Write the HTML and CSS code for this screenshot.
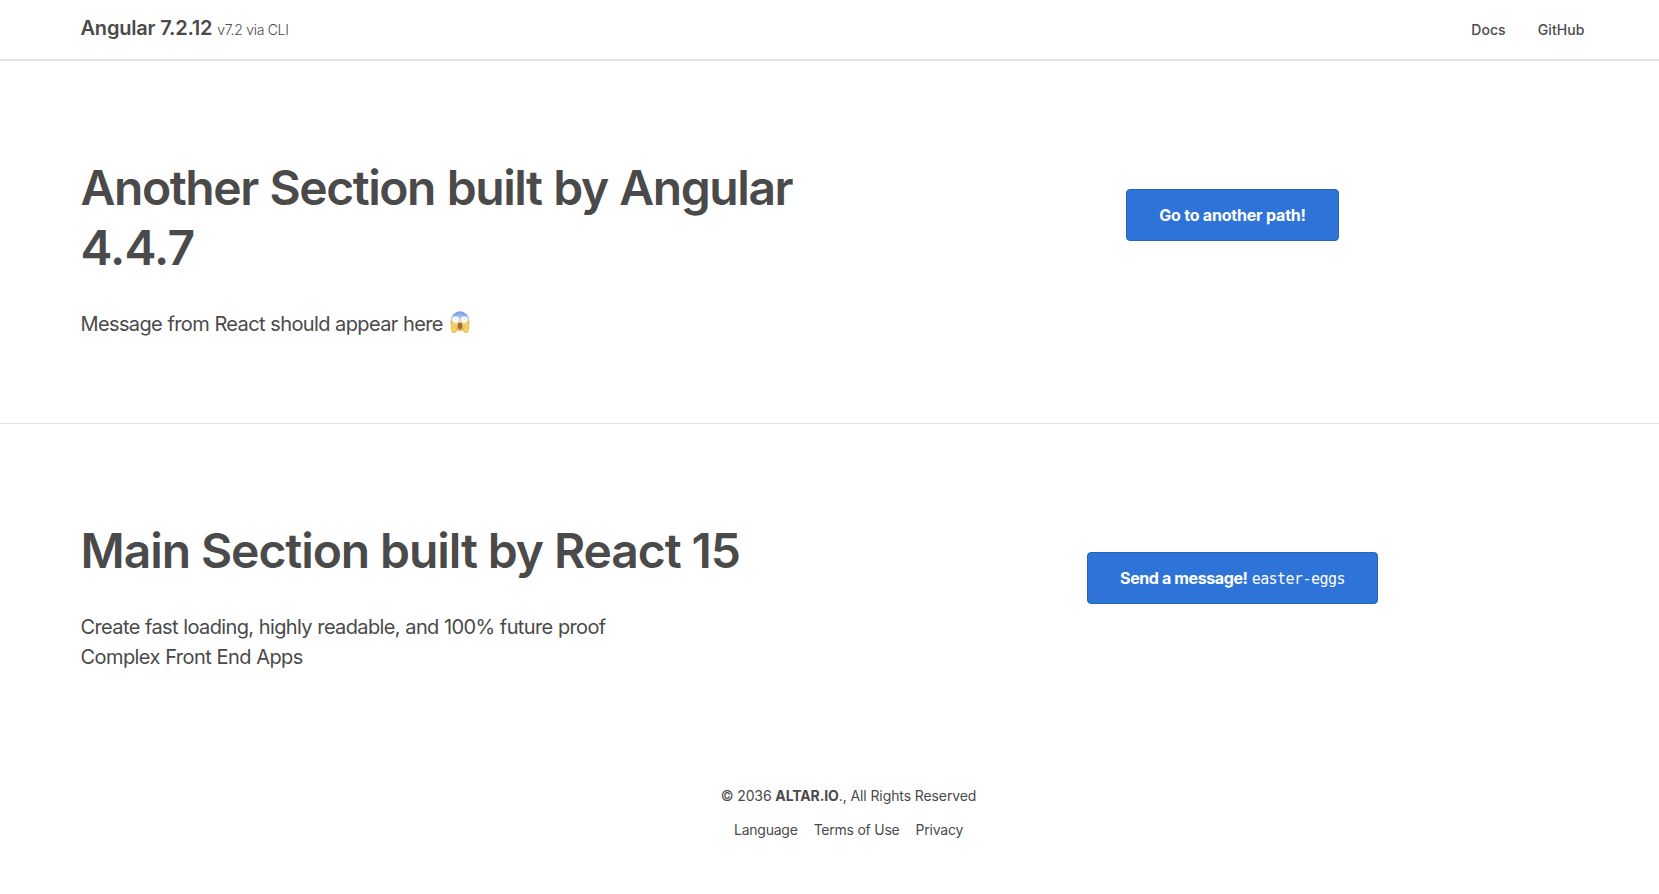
FILE: index.html
```html
<!DOCTYPE html>
<html lang="en">
<head>
<meta charset="utf-8">
<title>Angular 7.2.12</title>
<link rel="stylesheet" href="styles.css">
</head>
<body>
<header class="header">
  <div class="brand"><strong class="brand-name">Angular 7.2.12</strong> <span class="brand-note">v7.2 via CLI</span></div>
  <nav class="nav"><a class="nav-docs">Docs</a><a>GitHub</a></nav>
</header>
<main>
  <section class="section section-angular">
    <div class="copy">
      <h1 class="title title-angular">Another Section built by Angular<br><span class="version">4.4.7</span></h1>
      <p class="lead lead-angular">Message from React should appear here
        <svg class="emoji" viewBox="0 0 20 22" aria-label="Screaming face">
          <defs>
            <linearGradient id="face" x1="0" y1="0" x2="0" y2="1">
              <stop offset="0" stop-color="#6c98ee"/><stop offset=".3" stop-color="#adc6f5"/>
              <stop offset=".5" stop-color="#eedfb4"/><stop offset=".75" stop-color="#f8cf5c"/><stop offset="1" stop-color="#eeb04a"/>
            </linearGradient>
          </defs>
          <ellipse cx="10" cy="10.3" rx="9.5" ry="10" fill="url(#face)"/>
          <path d="M3.8 4.8Q5 3.4 7 3.4M13 3.4Q15 3.4 16.2 4.8" fill="none" stroke="#7d94cb" stroke-width=".7"/>
          <circle cx="5.7" cy="8.6" r="3.1" fill="#fff"/><circle cx="14.3" cy="8.6" r="3.1" fill="#fff"/>
          <circle cx="5.8" cy="8.6" r=".5" fill="#aaa"/><circle cx="14.2" cy="8.6" r=".5" fill="#aaa"/>
          <ellipse cx="10" cy="14.8" rx="2.5" ry="3.4" fill="#98703f"/>
          <path d="M.9 10.2Q2.5 9.4 3 12.2L6.2 17Q7 20.3 5.2 21.5H2.5Q1.7 19 1.2 16ZM19.1 10.2Q17.5 9.4 17 12.2L13.8 17Q13 20.3 14.8 21.5H17.5Q18.3 19 18.8 16Z" fill="#f8d05f" stroke="#dda450" stroke-width=".6"/>
        </svg></p>
    </div>
    <div class="action"><button class="button button-path">Go to another path!</button></div>
  </section>
  <section class="section section-react">
    <div class="copy">
      <h1 class="title title-react">Main Section built by React 15</h1>
      <p class="lead"><span class="lead-one">Create fast loading, highly readable, and 100% future proof</span><br><span class="lead-two">Complex Front End Apps</span></p>
    </div>
    <div class="action"><button class="button button-message"><span class="send">Send a message!</span> <code>easter-eggs</code></button></div>
  </section>
</main>
<footer class="footer">
  <p class="copyright">© 2036 <strong>ALTAR.IO</strong>., All Rights Reserved</p>
  <nav class="legal"><a>Language</a><a>Terms of Use</a><a>Privacy</a></nav>
</footer>
</body>
</html>
```
FILE: styles.css
```css
* { box-sizing: border-box; }
body {
  margin: 0;
  color: #4a4a4a;
  background: #fff;
  font-family: Inter, "Liberation Sans", sans-serif;
  font-size: 14px;
}
h1, p { margin: 0; }
.header {
  display: flex;
  justify-content: space-between;
  height: 61px;
  padding: 13px 74.5px 0 80.5px;
  border-bottom: 2px solid #e3e3e3;
}
.brand { display: flex; align-items: baseline; gap: 5px; line-height: 30px; white-space: nowrap; }
.brand-name { font-size: 20px; font-weight: 600; letter-spacing: -.2px; }
.brand-note { font-size: 14px; font-weight: 300; letter-spacing: -.3px; }
.nav { display: flex; gap: 32px; padding-top: 6px; line-height: 22px; font-weight: 500; letter-spacing: .08px; }
.section {
  display: grid;
  grid-template-columns: 800px 704px;
  padding-left: 80.5px;
}
.section-angular { height: 363px; padding-top: 97px; border-bottom: 1px solid #e2e2e2; }
.section-react { height: 326px; padding-top: 97px; }
.title { font-size: 48px; line-height: 60px; font-weight: 600; white-space: nowrap; }
.title-angular { letter-spacing: -1.44px; word-spacing: 1px; }
.title-react { letter-spacing: -1.08px; }
.version { letter-spacing: -.8px; }
.lead { margin-top: 31px; font-size: 20px; line-height: 30px; white-space: nowrap; letter-spacing: -.62px; word-spacing: .3px; }
.lead-two { letter-spacing: -.57px; }
.lead-angular { display: flex; gap: 7px; }
.emoji { width: 20px; height: 22px; margin-top: 2px; }
.action { display: flex; justify-content: center; align-items: flex-start; padding-top: 31px; }
.button {
  display: flex;
  justify-content: center;
  align-items: center;
  gap: 4px;
  height: 52px;
  padding: 0;
  border: 1px solid #2a62b8;
  border-radius: 4px;
  color: #fff;
  background: #2e73d8;
  font: 600 16px/24px Inter, "Liberation Sans", sans-serif;
  letter-spacing: -.3px;
  white-space: nowrap;
}
.button-path { width: 213px; font-weight: 700; letter-spacing: -.2px; }
.button-message { width: 291px; }
.send { font-weight: 700; letter-spacing: -.38px; }
.button code { padding-top: 2px; font: 400 15px/24px "DejaVu Sans Mono", monospace; letter-spacing: -.55px; }
.footer {
  display: flex;
  flex-direction: column;
  align-items: center;
  gap: 12px;
  padding: 35px 0 0 38px;
  line-height: 22px;
}
.copyright { letter-spacing: -.1px; }
.copyright strong { font-weight: 700; }
.legal { display: flex; gap: 16px; letter-spacing: -.23px; }
```
